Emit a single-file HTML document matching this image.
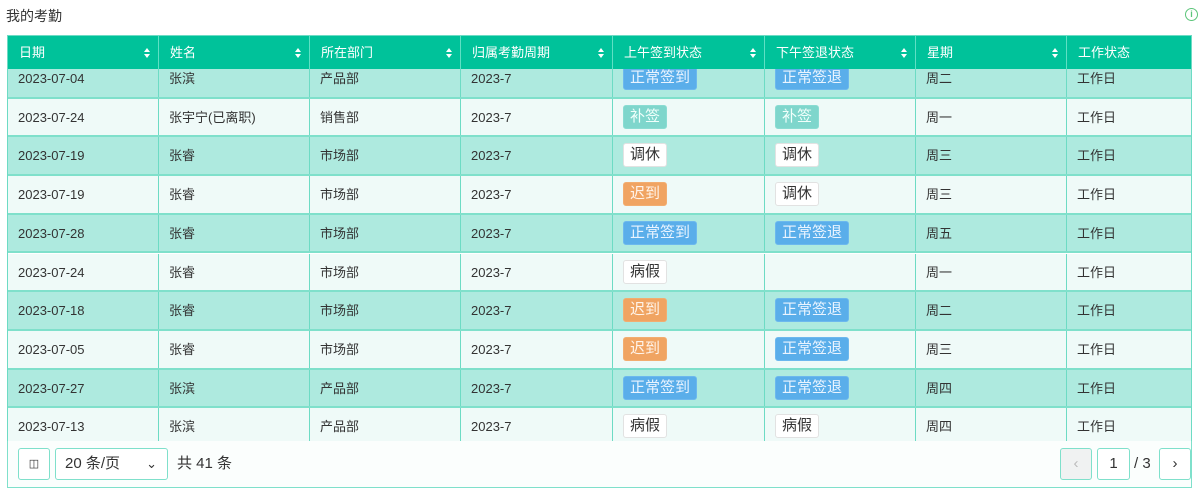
<!DOCTYPE html>
<html><head><meta charset="utf-8"><style>
*{margin:0;padding:0;box-sizing:border-box}
body{width:1200px;height:497px;background:#fff;font-family:"Liberation Sans","Noto Sans CJK SC",sans-serif;color:#333;position:relative;overflow:hidden}
.title{position:absolute;left:6px;top:6px;font-size:14px;color:#333}
.info{position:absolute;left:1185px;top:8px;width:13px;height:13px;border:1.5px solid #5cc57a;border-radius:50%;color:#5cc57a;font-size:9px;line-height:10px;text-align:center;font-weight:bold}
.head{position:absolute;left:7px;top:35px;width:1185px;height:34px;background:#00c29a;border:1px solid #6ddbc4;border-bottom:none}
.hc{position:absolute;top:0;height:34px;line-height:34px;color:#fff;font-size:13px;padding-left:11px;border-right:1px solid #5fe0c4}
.sort{position:absolute;right:8px;top:12px;width:6px;height:10px}
.body{position:absolute;left:7px;top:69px;width:1185px;height:372px;overflow:hidden;border-left:1px solid #6ddbc4;border-right:1px solid #6ddbc4}
.row{position:absolute;left:0;width:1185px;height:38.7px;border-bottom:2px solid #7fe0cb}
.odd{background:#aeeadf}.even{background:#effaf8}
.c{position:absolute;top:0;height:100%;line-height:37px;font-size:13px;padding-left:10px;border-right:1px solid #6ddbc4;color:#333;white-space:nowrap}
.tag{display:inline-block;height:24px;line-height:22px;padding:0 6px;border-radius:3px;font-size:15px;vertical-align:middle;margin-top:-3px}
.b{background:#5aaeea;color:#eaf4ff;border:1px solid #6cb8ee}
.t{background:#7fd6cc;color:#f0fffb;border:1px solid #8adcd2}
.o{background:#f0a462;color:#fff4ea;border:1px solid #f2ad70}
.w{background:#fff;color:#333;border:1px solid #e2e2e2}
.foot{position:absolute;left:7px;top:441px;width:1185px;height:47px;border:1px solid #7fe0cb;border-top:none;background:#fbfefd}
.btn{position:absolute;border:1px solid #7fe0cb;border-radius:3px;background:#fff;font-size:15px;color:#333;text-align:center}
</style></head><body>
<div class="title">我的考勤</div>
<div class="info">i</div>
<div class="head">
<div class="hc" style="left:0;width:151px">日期<svg class="sort" viewBox="0 0 6 10"><path d="M0 4L3 0L6 4Z M0 6L3 10L6 6Z" fill="#fff"/></svg></div>
<div class="hc" style="left:151px;width:151px">姓名<svg class="sort" viewBox="0 0 6 10"><path d="M0 4L3 0L6 4Z M0 6L3 10L6 6Z" fill="#fff"/></svg></div>
<div class="hc" style="left:302px;width:151px">所在部门<svg class="sort" viewBox="0 0 6 10"><path d="M0 4L3 0L6 4Z M0 6L3 10L6 6Z" fill="#fff"/></svg></div>
<div class="hc" style="left:453px;width:152px">归属考勤周期<svg class="sort" viewBox="0 0 6 10"><path d="M0 4L3 0L6 4Z M0 6L3 10L6 6Z" fill="#fff"/></svg></div>
<div class="hc" style="left:605px;width:152px">上午签到状态<svg class="sort" viewBox="0 0 6 10"><path d="M0 4L3 0L6 4Z M0 6L3 10L6 6Z" fill="#fff"/></svg></div>
<div class="hc" style="left:757px;width:151px">下午签退状态<svg class="sort" viewBox="0 0 6 10"><path d="M0 4L3 0L6 4Z M0 6L3 10L6 6Z" fill="#fff"/></svg></div>
<div class="hc" style="left:908px;width:151px">星期<svg class="sort" viewBox="0 0 6 10"><path d="M0 4L3 0L6 4Z M0 6L3 10L6 6Z" fill="#fff"/></svg></div>
<div class="hc" style="left:1059px;width:126px;border-right:none">工作状态</div>
</div>
<div class="body" id="b"></div>
<div class="foot">
<div class="btn" style="left:10px;top:7px;width:32px;height:32px;line-height:30px;font-size:11px">&#9707;</div>
<div class="btn" style="left:47px;top:7px;width:113px;height:32px;line-height:30px;text-align:left;padding-left:9px">20 条/页<span style="position:absolute;right:10px;top:0;font-size:13px">&#8964;</span></div>
<div style="position:absolute;left:169px;top:7px;line-height:32px;font-size:15px">共 41 条</div>
<div class="btn" style="left:1052px;top:7px;width:32px;height:32px;line-height:30px;background:#f0f2f2;color:#bbb">&#8249;</div>
<div class="btn" style="left:1089px;top:7px;width:33px;height:32px;line-height:30px">1</div>
<div style="position:absolute;left:1126px;top:7px;line-height:32px;font-size:15px">/ 3</div>
<div class="btn" style="left:1151px;top:7px;width:32px;height:32px;line-height:30px">&#8250;</div>
</div>
<script>
var d=[
["2023-07-04","张滨","产品部","b正常签到","b正常签退","周二"],
["2023-07-24","张宇宁(已离职)","销售部","t补签","t补签","周一"],
["2023-07-19","张睿","市场部","w调休","w调休","周三"],
["2023-07-19","张睿","市场部","o迟到","w调休","周三"],
["2023-07-28","张睿","市场部","b正常签到","b正常签退","周五"],
["2023-07-24","张睿","市场部","w病假","","周一"],
["2023-07-18","张睿","市场部","o迟到","b正常签退","周二"],
["2023-07-05","张睿","市场部","o迟到","b正常签退","周三"],
["2023-07-27","张滨","产品部","b正常签到","b正常签退","周四"],
["2023-07-13","张滨","产品部","w病假","w病假","周四"]];
var L=[0,151,302,453,605,757,908,1059,1185],h="";
function tg(s){return s?'<span class="tag '+s[0]+'">'+s.slice(1)+'</span>':''}
d.forEach(function(r,i){
var v=[r[0],r[1],r[2],"2023-7",tg(r[3]),tg(r[4]),r[5],"工作日"];
h+='<div class="row '+(i%2?'even':'odd')+'" style="top:'+(-9+i*38.7)+'px">';
for(var j=0;j<8;j++)h+='<div class="c" style="left:'+L[j]+'px;width:'+(L[j+1]-L[j])+'px;'+(j==7?'border-right:none':'')+(j==4||j==5?'padding-left:10px':'')+'">'+v[j]+'</div>';
h+='</div>'});
document.getElementById('b').innerHTML=h;
</script>
</body></html>
